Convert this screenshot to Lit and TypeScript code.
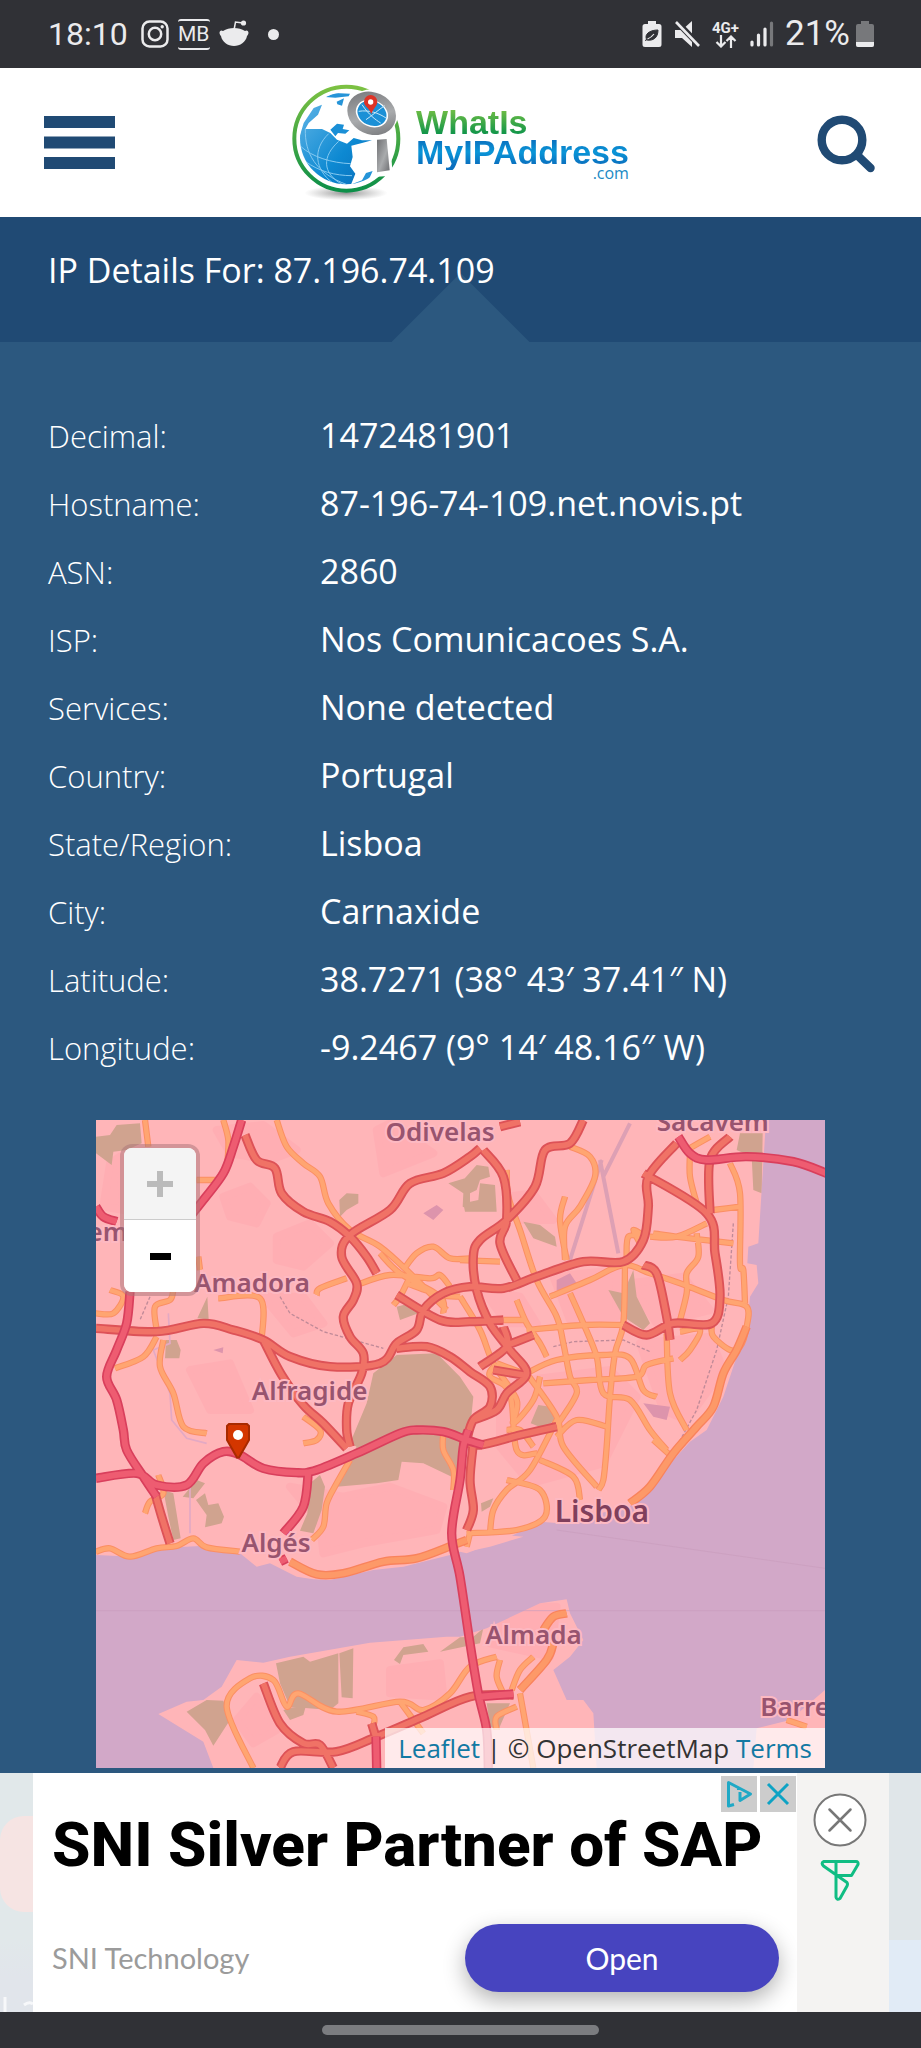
import { LitElement, html, css, svg } from "lit";
import { customElement } from "lit/decorators.js";

const DETAILS: [string, string][] = [
  ["Decimal:", "1472481901"],
  ["Hostname:", "87-196-74-109.net.novis.pt"],
  ["ASN:", "2860"],
  ["ISP:", "Nos Comunicacoes S.A."],
  ["Services:", "None detected"],
  ["Country:", "Portugal"],
  ["State/Region:", "Lisboa"],
  ["City:", "Carnaxide"],
  ["Latitude:", "38.7271 (38° 43′ 37.41″ N)"],
  ["Longitude:", "-9.2467 (9° 14′ 48.16″ W)"],
];

/* Place names, with their centre as a share of the map in percent. */
const PLACES = [
  { name: "Odivelas", x: 47.2, y: 1.7, big: false },
  { name: "Sacavém", x: 84.6, y: 0.2, big: false },
  { name: "em", x: 1.6, y: 17.2, big: false },
  { name: "Amadora", x: 21.4, y: 25, big: false },
  { name: "Alfragide", x: 29.3, y: 41.6, big: false },
  { name: "Algés", x: 24.7, y: 65.2, big: false },
  { name: "Lisboa", x: 69.4, y: 60.4, big: true },
  { name: "Almada", x: 60, y: 79.3, big: false },
  { name: "Barrei", x: 96.4, y: 90.4, big: false },
];

const GREEN = [
  "M850 790 920 735 1040 730 1110 800 1150 860 1140 960 1120 1100 1085 1100 1000 1060 935 1055 925 1110 860 1120 740 1130 800 1010 780 1000 830 880Z",
  "M18 80 60 75 80 45 150 40 155 100 110 120 70 125 65 165 45 150 18 130Z",
  "M750 320 748 270 770 250 805 252 805 280 770 300Z",
  "M322 625 352 560 356 628Z",
  "M225 745 228 690 260 690 272 720 268 745Z",
  "M220 1140 250 1150 272 1285 250 1290 235 1220Z",
  "M318 1170 345 1150 355 1185 385 1180 402 1220 395 1240 345 1252 350 1215Z",
  "M278 1160 320 1110 345 1120 310 1165Z",
  "M660 1120 690 1095 705 1130 695 1200 670 1270 630 1262 652 1210Z",
  "M558 1660 640 1640 660 1655 745 1630 745 1780 720 1800 600 1790 570 1720Z",
  "M748 1630 790 1615 788 1765 755 1762Z",
  "M290 1805 350 1770 400 1772 420 1830 370 1907 345 1860Z",
  "M580 1800 650 1780 640 1815 600 1830Z",
  "M912 1650 940 1612 1000 1602 1015 1625 940 1635 930 1662Z",
  "M1050 1625 1110 1582 1150 1580 1180 1555 1170 1600Z",
  "M1075 220 1140 200 1140 300 1118 290 1120 250Z",
  "M1115 215 1160 165 1195 170 1200 200 1170 210 1160 240 1140 250 1115 240ZM1170 220 1215 225 1220 305 1125 305 1120 280 1165 270Z",
  "M1300 335 1350 345 1395 380 1400 410 1330 385Z",
  "M1555 540 1600 550 1630 480 1640 560 1680 640 1660 660 1600 620Z",
  "M1950 70 2018 70 2015 250 1990 240 1985 140 1940 120Z",
  "M1322 940 1345 885 1380 890 1395 930 1360 955Z",
  "M920 590 960 580 985 610 930 630Z",
  "M1190 1780 1260 1780 1225 1860 1200 1850Z",
  "M1173 1180 1210 1165 1200 1190 1175 1205Z",
];

const PATCHES = [
  "M400 260 480 230 530 280 500 340 420 320Z",
  "M560 380 660 340 720 400 640 470 560 450Z",
  "M380 60 520 45 620 120 540 150 420 130Z",
  "M860 60 900 40 1030 130 880 190Z",
  "M300 780 420 760 480 900 360 900Z",
  "M520 560 640 560 700 640 610 670Z",
  "M600 1130 760 1160 900 1130 1060 1190 1040 1260 820 1300 700 1330 690 1240Z",
  "M1180 540 1290 560 1340 640 1250 640Z",
  "M1390 500 1580 480 1580 620 1440 630Z",
  "M1620 520 1780 500 1860 600 1700 640Z",
  "M1230 820 1560 780 1640 860 1540 1060 1320 1120 1230 1010Z",
  "M1650 700 1860 680 1900 780 1790 930 1720 900Z",
  "M1250 260 1330 250 1390 330 1290 330Z",
  "M60 160 90 140 100 300 40 290Z",
  "M440 1830 500 1760 560 1860 490 1900Z",
  "M900 1680 1050 1660 1060 1760 900 1750Z",
  "M1250 1490 1400 1490 1380 1640 1200 1600Z",
];

const ORANGE = [
  "M165 30 175 110M400 30 415 90 412 160M320 210 385 210M560 30 590 110 640 160 690 200 715 280 780 360 870 410 960 490 1070 600",
  "M680 555 690 535 770 505M800 525 900 495 1020 505 1050 495 1080 530M940 480 980 430 1030 410 1080 445 1140 445M950 520 1050 555 1110 560M910 585 930 560 960 500M870 430 930 490 1050 560 1060 610",
  "M385 565 510 565 515 690M200 660 195 590 240 570 250 540M18 610 70 610 100 560 60 540M200 680 160 740 75 775M220 690 210 770 250 850 280 950 350 970M325 440 330 480",
  "M640 920 690 960 680 990 640 1000M1060 970 1060 1020 1090 1080 1090 1140",
  "M18 1325 60 1315 120 1340 200 1315 260 1308 310 1285 350 1312 450 1325",
  "M780 1050 740 1120 710 1180 700 1250 665 1290M165 1210 180 1175 220 1150 205 1095",
  "M490 1974 410 1790 480 1705 550 1710 590 1790 625 1750 740 1805 930 1775 1000 1800 1080 1750 1140 1670 1220 1640M930 1775 1000 1870M800 1805 850 1820 850 1850",
  "M1110 450 1230 455M1250 180 1255 260 1290 360 1340 510 1400 620 1420 700 1440 800 1460 850 1405 940",
  "M1440 110 1500 140 1515 200 1470 290 1425 350 1425 450M1425 260 1410 330 1430 450",
  "M1380 560 1500 510 1600 465 1680 490 1770 520 1900 570 1970 590 1970 650 1950 710 1920 720 1870 680 1865 650",
  "M1605 460 1600 640 1575 730 1560 860 1550 1010 1540 1110 1525 1140",
  "M1680 380 1760 380 1850 340M1690 370 1800 385 1930 400M1820 370 1825 440 1790 490 1790 550 1765 650M1610 450 1615 380 1660 380 1630 360 1650 400",
  "M1790 120 1860 80M1800 130 1800 200 1820 280M1920 160 1950 250 1950 460 1960 480 1965 580M1870 300 1950 290",
  "M1110 560 1170 660 1210 760 1280 870 1270 940 1330 870 1350 800M1240 630 1310 630M1280 570 1310 640 1350 700 1370 740",
  "M1310 660 1480 645 1600 645M1310 790 1400 750 1540 735 1620 745 1660 840 1700 860M1360 820 1500 810 1640 800 1670 765 1750 745",
  "M1440 550 1480 640 1520 740 1540 850 1620 870 1680 960 1730 1020",
  "M1730 670 1740 850 1790 960M1770 665 1830 660 1800 720 1770 750",
  "M1310 790 1400 920 1420 1010 1520 1130M1400 930 1320 1080 1250 1140 1210 1200 1200 1270M1250 1110 1350 1140 1365 1220 1280 1260 1130 1270",
  "M1210 770 1200 800 1260 850 1280 1020 1340 1030M1400 980 1460 930 1550 950M1350 1050 1450 1100 1470 1170M1250 960 1290 960 1330 1010",
  "M1220 760 1300 790M1140 1270 1130 1310M1690 990 1740 1035",
  "M1230 1650 1220 1700 1240 1750M1330 1640 1290 1680 1265 1740M1290 1750 1330 1974M1280 1790 1220 1820 1220 1860M2090 1830 2150 1850",
];

const ORANGE_WIDE = [
  "M1970 650 1940 720 1900 790 1870 890 1820 950 1750 1030 1680 1130 1620 1180",
  "M600 1355 680 1393 760 1390 880 1355 980 1345 1090 1305 1130 1290",
  "M1430 1510 1390 1520 1360 1560M1390 1600 1370 1650 1290 1740",
];

const TRUNK = [
  "M465 75 500 150 555 175 575 250 640 305 720 335 780 380 830 440 860 490",
  "M1170 115 1140 140 1060 190 960 220 900 300 780 375 755 440 800 520 790 570 760 620 780 680 820 730 815 790 775 880 770 960 780 1010",
  "M18 655 200 665 340 640 430 660 520 690 600 740 720 770 870 760 920 700 980 660 1000 600 1060 550 1140 530 1240 535 1340 500 1480 455 1600 455 1660 390 1675 290 1675 200 1760 100",
  "M920 555 1050 630 1140 635 1240 630M520 690 575 795 640 885 700 940 770 1015",
  "M920 715 1010 710 1080 740 1140 785 1200 830 1200 890 1150 930 1130 990",
  "M1480 30 1440 100 1365 120 1335 230 1250 330 1170 390 1150 440 1160 540 1200 640 1260 720 1310 790 1250 850 1220 900 1150 930",
  "M1230 50 1290 35M1180 120 1240 200 1250 330 1230 400 1280 510",
  "M1660 190 1850 310 1875 430 1890 560 1865 640 1750 640 1670 675 1600 645",
  "M1660 465 1700 490 1730 620 1740 690M1860 310 1860 150 1920 80",
  "M1110 990 1170 1005 1290 975 1400 950M1240 650 1250 710 1170 770M1240 710 1330 675M1210 780 1300 795",
  "M195 1150 215 1220 240 1300",
  "M520 1720 570 1840 640 1900 690 1905 730 1974M570 1974 610 1925 740 1925 860 1880 1000 1820 1140 1760 1270 1755",
  "M1150 1000 1140 1110 1150 1200 1130 1260M845 1840 860 1890",
];

const MOTORWAY = [
  "M455 30 430 110 400 190 340 270 300 320M120 545 110 640 80 720 50 800 80 870 100 960 110 1020 160 1100 200 1160",
  "M18 290 40 320 80 335",
  "M18 1105 140 1090 200 1125 290 1125 340 1060 400 1025 450 1035 520 1075 620 1088 680 1080 800 1030 930 970 980 960 1060 965 1130 990 1180 1005",
  "M655 1085 640 1190 580 1270M590 1345 570 1355",
  "M1135 960 1120 1010 1110 1110 1085 1270 1110 1400 1140 1600 1165 1750 1190 1860 1195 1974",
  "M1765 80 1800 130 1850 150 1970 140 2110 155 2210 190M1170 1760 1270 1752M858 1880 860 1974",
];

const WATER =
  "M2028 30 2015 240 2005 400 1975 410 1972 460 2000 465 2005 520 1980 560 1972 640 1940 740 1900 860 1850 960 1800 995 1750 1050 1670 1155 1630 1185 1410 1240 1350 1235 1260 1280 1130 1330 1110 1325 1080 1335 940 1370 850 1380 720 1410 670 1408 620 1400 540 1360 500 1370 450 1330 330 1308 200 1315 130 1340 18 1335V1974H370L340 1895 205 1812 290 1775 340 1770 395 1730 440 1650 520 1658 600 1640 840 1598 1070 1580 1110 1580 1190 1555 1350 1480 1430 1468 1440 1510 1480 1590 1440 1640 1390 1680 1430 1770 1480 1770 1510 1810 1520 1974H1990L2000 1855 2100 1830 2205 1740V30Z";

/* Rounds each polyline of a road into a curve through the same points. */
const smooth = (paths: string[]) =>
  paths
    .join("")
    .split("M")
    .filter(Boolean)
    .map((line) => {
      const n = line.trim().split(/\s+/).map(Number);
      const pts: number[][] = [];
      for (let i = 0; i < n.length; i += 2) pts.push([n[i], n[i + 1]]);
      let d = `M${pts[0][0]} ${pts[0][1]}`;
      for (let i = 0; i < pts.length - 1; i++) {
        const a = pts[i - 1] ?? pts[i], b = pts[i], c = pts[i + 1], e = pts[i + 2] ?? c;
        d += `C${b[0] + (c[0] - a[0]) / 6} ${b[1] + (c[1] - a[1]) / 6} ${c[0] - (e[0] - b[0]) / 6} ${c[1] - (e[1] - b[1]) / 6} ${c[0]} ${c[1]}`;
      }
      return d;
    })
    .join("");

const road = (paths: string[], casing: string, fill: string, wide: number, thin: number) => {
  const d = smooth(paths);
  return svg`
  <path d=${d} stroke=${casing} stroke-width=${wide}></path>
  <path d=${d} stroke=${fill} stroke-width=${thin}></path>`;
};

@customElement("status-bar")
export class StatusBar extends LitElement {
  static styles = css`
    :host { display: flex; align-items: center; justify-content: space-between; height: 68px; padding: 0 47px 0 48px; background: #303136; color: #ebebed; font: 400 32px/40px Roboto, sans-serif; }
    .side { display: flex; align-items: center; }
    .left { gap: 9px; }
    .right { gap: 11px; }
    .time { margin-right: 4px; }
    .dot { width: 11px; height: 11px; border-radius: 50%; background: currentColor; margin-left: 10px; }
    .mb { display: grid; place-items: center; width: 32px; height: 31px; box-sizing: border-box; border: solid currentColor; border-width: 2px 0; border-radius: 3px; font: 400 21px/24px Roboto, sans-serif; }
    .net { display: grid; justify-items: center; font: 700 15px/14px Roboto, sans-serif; }
    .level { display: flex; align-items: center; gap: 6px; font-size: 35px; }
    svg { display: block; }
  `;
  render() {
    return html`
      <div class="side left">
        <span class="time">18:10</span>
        <svg width="28" height="28" viewBox="0 0 28 28" fill="none" stroke="currentColor" stroke-width="2.500"><rect x="1.500" y="1.500" width="25" height="25" rx="7"/><circle cx="14" cy="14" r="6.200"/><circle cx="21.200" cy="6.800" r="1.700" fill="currentColor" stroke="none"/></svg>
        <span class="mb">MB</span>
        <svg width="30" height="30" viewBox="0 0 30 30" fill="currentColor"><path d="M4 12C1 10-1 14 2 17c1 6 7 10 13 10s12-4 13-10c3-3 1-7-2-5-6-4-16-4-22 0Z"/><path d="M15 11 16.500 3 24 4" fill="none" stroke="currentColor" stroke-width="1.500"/><circle cx="24.500" cy="4" r="2.600"/></svg>
        <span class="dot"></span>
      </div>
      <div class="side right">
        <svg width="20" height="28" viewBox="0 0 20 28"><path d="M6 1h8v3h3a2.500 2.500 0 0 1 2.500 2.500v18A2.500 2.500 0 0 1 17 27H3a2.500 2.500 0 0 1-2.500-2.500v-18A2.500 2.500 0 0 1 3 4h3Z" fill="#ebebed"/><path d="M16 10C9 10 4 13 4 17c0 1 .3 2 1 3 6 1 11-2 11-10ZM3 20.500c3-1 6-3 8-6" fill="#303136" stroke="#303136" stroke-width="1"/><path d="M5.500 19C8 18 10 16.500 12 14" stroke="#ebebed" fill="none" stroke-width="1.200"/></svg>
        <svg width="28" height="28" viewBox="0 0 28 28"><path d="M2 10h7l10-9v26L9 18H2Z" fill="#ebebed"/><path d="M2 0 28 27" stroke="#303136" stroke-width="6"/><path d="M3 2 26 26" stroke="#ebebed" stroke-width="2.600"/></svg>
        <span class="net">4G+<svg width="22" height="13" viewBox="0 0 22 13" fill="none" stroke="currentColor" stroke-width="2.200"><path d="M6 0v11M1.500 7 6 11.500 10.500 7M16 13V2M11.500 6 16 1.500 20.500 6"/></svg></span>
        <svg width="24" height="26" viewBox="0 0 24 26" stroke-width="3.200" stroke-linecap="round"><path d="M2 21v3M8.500 14v10M15 8v16" stroke="#ebebed"/><path d="M21.500 2v22" stroke="#77787b"/></svg>
        <span class="level">21%<svg width="18" height="28" viewBox="0 0 18 28"><path d="M5 1h8v3h3a2 2 0 0 1 2 2v19a2 2 0 0 1-2 2H2a2 2 0 0 1-2-2V6a2 2 0 0 1 2-2h3Z" fill="#77787b"/><path d="M0 22h18v3a2 2 0 0 1-2 2H2a2 2 0 0 1-2-2Z" fill="#ebebed"/></svg></span>
      </div>`;
  }
}

@customElement("site-header")
export class SiteHeader extends LitElement {
  static styles = css`
    :host { display: flex; align-items: center; justify-content: space-between; height: 149px; padding: 0 44px; background: #fff; box-sizing: border-box; }
    button { display: flex; width: 71px; border: 0; padding: 0; background: none; cursor: pointer; }
    .search { justify-content: flex-end; }
    svg { display: block; flex: none; }
    .logo { display: flex; align-items: center; gap: 12px; text-decoration: none; }
    .words { display: grid; font: 700 34px/24px "Liberation Sans", Arial, sans-serif; }
    .what, .my { background: linear-gradient(#6fbd45, #10954a); -webkit-background-clip: text; background-clip: text; color: transparent; }
    .my { line-height: 36px; background-image: linear-gradient(#0a6fbe 15%, #0a96d8 50%, #0a6fbe 85%); }
    .com { justify-self: end; font: 400 16px/6px "Open Sans", sans-serif; color: #2089c4; }
  `;
  render() {
    return html`
      <button aria-label="Menu"><svg width="71" height="53" viewBox="0 0 71 53" fill="#204a74"><path d="M0 0h71v12H0ZM0 20.500h71v12H0ZM0 41h71v12H0Z"/></svg></button>
      <a class="logo" href="#" aria-label="WhatIs MyIPAddress .com">
        <svg width="112" height="120" viewBox="40 40 336 360">
          <defs>
            <linearGradient id="ring" x1="0" y1="0" x2="0" y2="1"><stop offset="0" stop-color="#7cc142"/><stop offset="1" stop-color="#0c8f48"/></linearGradient>
            <linearGradient id="sea" x1="0" y1="0" x2="1" y2="1"><stop offset="0" stop-color="#5fb4e6"/><stop offset=".6" stop-color="#0d89d2"/><stop offset="1" stop-color="#0a6cb8"/></linearGradient>
            <linearGradient id="steel" x1="0" y1="0" x2="1" y2="1"><stop offset="0" stop-color="#6f7073"/><stop offset=".55" stop-color="#a9abad"/><stop offset="1" stop-color="#6c6d70"/></linearGradient>
            <radialGradient id="shade"><stop offset="0" stop-color="#777" stop-opacity=".8"/><stop offset="1" stop-color="#999" stop-opacity="0"/></radialGradient>
            <clipPath id="ball"><circle cx="202" cy="206" r="138"/></clipPath>
          </defs>
          <ellipse cx="202" cy="370" rx="125" ry="22" fill="url(#shade)"/>
          <circle cx="203" cy="207" r="156" fill="#fff" stroke="url(#ring)" stroke-width="12"/>
          <circle cx="202" cy="206" r="138" fill="#fff"/>
          <g clip-path="url(#ball)">
            <path d="M60 210 75 160 105 115 130 105 118 135 90 160 80 178 130 178 155 190 175 210 205 222 225 205 250 212 280 212 250 220 218 228 222 262 214 290 230 312 215 350H60Z" fill="url(#sea)"/>
            <path d="M140 82 168 70 214 72 210 80 170 84ZM174 96 196 86 190 108 176 104ZM215 345 250 332 262 310 282 304 270 330 230 350Z" fill="#2594d8"/>
            <path d="M80 178C78 250 110 310 205 345M150 192C100 240 110 300 160 338M180 215C130 260 130 310 190 344M66 230C100 262 160 280 216 282M80 275C120 305 170 318 220 318" fill="none" stroke="#86c9f0" stroke-width="3"/>
            <path d="M155 180 175 162 196 165 192 178 212 182 200 192 178 190 170 200Z" fill="#1a8fd6"/>
          </g>
          <ellipse cx="279" cy="131" rx="80" ry="72" fill="#fff"/>
          <g transform="rotate(25 279 131)"><ellipse cx="279" cy="131" rx="75" ry="63" fill="url(#steel)"/><ellipse cx="280" cy="131" rx="50" ry="40" fill="#fff"/><ellipse cx="280" cy="131" rx="45" ry="36" fill="#1c90d6"/></g>
          <path d="M240 125C270 120 300 130 322 145M262 150C280 138 300 120 318 108M250 105C270 135 290 150 306 160" fill="none" stroke="#c9e7f8" stroke-width="3"/>
          <path d="M278 133C270 112 256 110 256 96a20 20 0 0 1 40 0C296 110 284 114 278 133Z" fill="#dd3326"/><circle cx="276" cy="97" r="8" fill="#fff"/>
          <path d="M288 202h46l8 116-60 4Z" fill="#fff"/>
          <path d="M295 210 324 208 333 302 295 308Z" fill="url(#steel)"/>
        </svg>
        <span class="words"><span class="what">WhatIs</span><span class="my">MyIPAddress</span><span class="com">.com</span></span>
      </a>
      <button class="search" aria-label="Search"><svg width="60" height="60" viewBox="0 0 60 60" fill="none" stroke="#204a74"><circle cx="25" cy="27" r="20.300" stroke-width="8.400"/><path d="M40 42 53.500 55" stroke-width="8.500" stroke-linecap="round"/></svg></button>`;
  }
}

@customElement("region-map")
export class RegionMap extends LitElement {
  static styles = css`
    :host { display: block; position: relative; height: 648px; overflow: hidden; background: #ffb5b8; }
    .tiles { display: block; width: 100%; height: 100%; }
    .place { position: absolute; transform: translate(-50%, -50%); font: 600 26px/32px "Noto Sans", sans-serif; color: #98546f; white-space: nowrap; -webkit-text-stroke: 4px #fdb9c2; paint-order: stroke fill; }
    .big { font-size: 30px; color: #803f5c; }
    .zoom { position: absolute; left: 24px; top: 24px; display: grid; border: 4px solid #a8737880; border-radius: 12px; overflow: hidden; background: #fff; background-clip: padding-box; }
    .zoom button { display: grid; place-items: center; width: 72px; height: 72px; padding: 0; border: 0; background: #fff; color: #000; }
    .zoom button:first-child { background: #f4f4f4; color: #bbb; border-bottom: 1px solid #ccc; }
    .pin { position: absolute; left: 19.500%; top: 46.800%; margin-left: -12px; }
    .credit { position: absolute; right: 0; bottom: 0; padding: 0 13px; background: #ffffffb8; color: #333; font: 400 26px/40px "Open Sans", sans-serif; white-space: nowrap; }
    .credit a { color: #1279a3; text-decoration: none; }
  `;
  render() {
    return html`
      <svg class="tiles" viewBox="18 30 2187 1944" preserveAspectRatio="xMidYMid slice" role="img" aria-label="Map of Lisboa">
        <rect x="18" y="30" width="2187" height="1944" fill="#ffb5b8"/>
        <path d=${PATCHES.join("")} fill="#ffa4ae" opacity=".4" stroke="#ffa4ae" stroke-width="24" stroke-linejoin="round"/>
        <path d=${GREEN.join("")} fill="#d0a38f"/>
        <path d="M1535 150 1440 450M1530 150 1585 430M1620 40 1540 200" fill="none" stroke="#dda0b4" stroke-width="12"/>
        <path d="M1400 510 1440 490 1460 520 1440 545 1400 540ZM1660 880 1740 890 1730 930 1690 920ZM1000 310 1040 285 1060 300 1030 330ZM370 720 400 712 398 730Z" fill="#dd94ac"/>
        <path d=${WATER} fill="#d2a8c8"/>
        <path d="M1150 1285 1250 1275 1300 1280 1200 1310 1130 1325Z" fill="#ffb5b8"/>
        <path d="M18 1502H2205M1400 1260 2205 1375" stroke="#c99dbd" stroke-width="2" fill="none"/>
        <path d="M570 560 600 610 700 665 880 715M1390 710 1450 695 1600 690 1680 725M1930 340 1915 560 1880 720 1820 900 1760 1010M180 560 150 630" fill="none" stroke="#c08a98" stroke-width="4" stroke-dasharray="10 6"/>
        <path d="M235 610 240 700 190 720 240 850 245 930 290 985 350 1000M300 1120 300 1270" fill="none" stroke="#e3a9c4" stroke-width="5"/>
        <g fill="none" stroke-linejoin="round" stroke-linecap="butt">
          ${road(ORANGE, "#fb8f63", "#ffa571", 19, 13)}
          ${road(ORANGE_WIDE, "#f9835c", "#fd9968", 26, 18)}
          ${road(TRUNK, "#dd5257", "#f07266", 28, 17)}
          ${road(MOTORWAY, "#d93f5c", "#ee5c71", 28, 18)}
        </g>
      </svg>
      ${PLACES.map((p) => html`<span class="place ${p.big ? "big" : ""}" style="left:${p.x}%;top:${p.y}%">${p.name}</span>`)}
      <svg class="pin" width="24" height="36" viewBox="0 0 24 36"><path d="M3 1h18l2 2v14L13 34.500h-2L1 17V3Z" fill="#d43600" stroke="#a82a00" stroke-width="2"/><circle cx="12" cy="12" r="5" fill="#fff"/></svg>
      <div class="zoom">
        <button aria-label="Zoom in"><svg width="26" height="26" viewBox="0 0 26 26"><path d="M0 13h26M13 0v26" stroke="currentColor" stroke-width="6"/></svg></button>
        <button aria-label="Zoom out"><svg width="21" height="7" viewBox="0 0 21 7"><path d="M0 3.500h21" stroke="currentColor" stroke-width="7"/></svg></button>
      </div>
      <div class="credit"><a href="#">Leaflet</a> | © OpenStreetMap <a href="#">Terms</a></div>`;
  }
}

@customElement("ad-banner")
export class AdBanner extends LitElement {
  static styles = css`
    :host { display: flex; background: #e1e7ea; overflow: hidden; }
    .edge { flex: none; width: 33px; position: relative; overflow: hidden; background: linear-gradient(#e1e8ea 70%, #e1e5eb 85%); }
    .blob { position: absolute; left: 0; top: 43px; width: 70px; height: 96px; border-radius: 24px; background: #f6e4e3; }
    .scrap { position: absolute; left: 3px; bottom: 0; display: block; }
    .card { flex: 1; position: relative; background: #fff; padding: 36px 18px 20px 19px; overflow: hidden; }
    .title { margin: 0; font: 800 62px/72px Roboto, sans-serif; color: #000; white-space: nowrap; }
    .row { display: flex; justify-content: space-between; align-items: center; margin-top: 43px; }
    .by { font: 400 29px/36px Lato, sans-serif; color: #9b9b9b; }
    .open { width: 314px; height: 68px; border: 0; border-radius: 34px; background: #4744bf; color: #fff; font: 400 30px/36px Lato, sans-serif; box-shadow: 0 8px 22px #0000004d; }
    .marks { position: absolute; top: 3px; right: 1px; display: flex; gap: 3px; }
    .marks button { display: grid; place-items: center; width: 36px; height: 36px; padding: 0; border: 0; background: #ccc; }
    .side { flex: none; width: 92px; box-sizing: border-box; padding: 20px 6px 0 0; display: flex; flex-direction: column; align-items: center; gap: 12px; background: #f4f3f2; }
    .side button { padding: 0; border: 0; background: none; }
    svg { display: block; }
    .end { flex: none; width: 32px; background: linear-gradient(#e0e6e9 70%, #e1ebf6 70%); }
  `;
  render() {
    return html`
      <div class="edge"><div class="blob"></div><svg class="scrap" width="30" height="16" viewBox="0 0 30 16" fill="none" stroke="#f7f8fa" stroke-width="3"><path d="M2 1v15M21 9q5-4 9-1"/></svg></div>
      <div class="card">
        <h2 class="title">SNI Silver Partner of SAP</h2>
        <div class="row"><span class="by">SNI Technology</span><button class="open">Open</button></div>
        <div class="marks">
          <button aria-label="Ad choices"><svg width="28" height="28" viewBox="0 0 28 28" fill="none" stroke="#1fa9c6" stroke-width="3" stroke-linejoin="round"><path d="M9 24.500 3.500 26V2.500L25.500 14 15 20.500V12"/><path d="M13.500 8.500v1.500" /></svg></button>
          <button aria-label="Close ad"><svg width="24" height="24" viewBox="0 0 24 24" stroke="#0ea3c4" stroke-width="3"><path d="M2 2 22 22M22 2 2 22"/></svg></button>
        </div>
      </div>
      <div class="side">
        <button aria-label="Dismiss"><svg width="54" height="54" viewBox="0 0 54 54" fill="none" stroke="#777"><circle cx="27" cy="27" r="25.500" fill="#fff" stroke-width="2"/><path d="M16.500 16.500 37.500 37.500M37.500 16.500 16.500 37.500" stroke-width="2.500" stroke-linecap="round"/></svg></button>
        <svg width="40" height="42" viewBox="0 0 40 42" fill="none" stroke="#10bd83" stroke-width="3" stroke-linejoin="round" stroke-linecap="round"><path d="M17 16.500h14.500L38 5.500Q38.500 2.500 36 2.500H4Q.500 4 3.500 7L27 23.500Q28 25 27 27L20 39.500Q16.500 41.500 16 38V3"/></svg>
      </div>
      <div class="end"></div>`;
  }
}

@customElement("app-root")
export class AppRoot extends LitElement {
  static styles = css`
    :host { display: block; background: #2c587f; color: #fff; font: 400 34px/48px "Open Sans", sans-serif; }
    .band { position: relative; background: #204a74; padding: 29px 48px 48px; }
    .notch { position: absolute; left: 50%; bottom: 0; width: 138px; height: 69px; transform: translateX(-50%); background: #2c587f; clip-path: polygon(50% 0, 100% 100%, 0 100%); }
    h1 { position: relative; margin: 0; font: inherit; }
    dl { display: grid; gap: 20px; margin: 0; padding: 69px 48px 49px; }
    .item { display: grid; grid-template-columns: 272px 1fr; align-items: baseline; height: 48px; }
    dt { font-size: 31px; font-weight: 300; }
    dd { margin: 0; }
    .map { margin: 0 96px 5px; }
    .nav { display: grid; place-items: center; height: 36px; background: #303136; }
    .pill { width: 30%; height: 10px; border-radius: 5px; background: #7b7c80; }
  `;
  render() {
    return html`
      <status-bar></status-bar>
      <site-header></site-header>
      <main>
        <div class="band"><div class="notch"></div><h1>IP Details For: 87.196.74.109</h1></div>
        <dl>${DETAILS.map(([k, v]) => html`<div class="item"><dt>${k}</dt><dd>${v}</dd></div>`)}</dl>
        <region-map class="map"></region-map>
      </main>
      <ad-banner></ad-banner>
      <div class="nav"><div class="pill"></div></div>`;
  }
}
